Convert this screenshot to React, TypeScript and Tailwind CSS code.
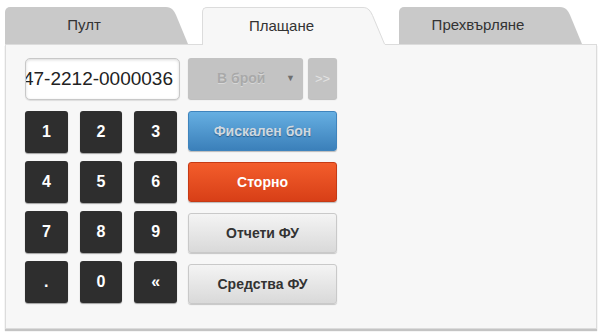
import React from 'react';

const tabs = [
  { label: 'Пулт', active: false },
  { label: 'Плащане', active: true },
  { label: 'Прехвърляне', active: false },
];

const keys = ['1', '2', '3', '4', '5', '6', '7', '8', '9', '.', '0', '«'];

const Tab: React.FC<{ label: string; active: boolean }> = ({ label, active }) => (
  <div className={`relative flex h-[37px] w-[183px] ${active ? 'z-10 -mb-px h-[38px]' : ''}`}>
    <div
      className={`flex flex-1 items-center justify-center rounded-tl-[5px] text-[15px] text-[#333] ${
        active ? 'border-l border-t border-[#dcdcdc] bg-[#f7f7f7]' : 'bg-[#c9c9c9]'
      }`}
    >
      {label}
    </div>
    <svg width="25" height={active ? 38 : 37} viewBox={`0 0 25 ${active ? 38 : 37}`} className="block">
      <path
        d={active ? 'M0 0 H3 C9 0 11 4 13 8 L25 38 H0 Z' : 'M0 0 H3 C9 0 11 4 13 8 L25 37 H0 Z'}
        fill={active ? '#f7f7f7' : '#c9c9c9'}
      />
      {active && <path d="M0 0.5 H3 C8.5 0.5 10.5 4.5 12.5 8.5 L24.5 37" fill="none" stroke="#dcdcdc" />}
    </svg>
  </div>
);

const App: React.FC = () => {
  return (
    <div className="h-[334px] w-[600px] bg-white pl-[5px] pt-[7px] font-['Liberation_Sans',Arial,sans-serif]">
      {/* Tabs */}
      <div className="flex gap-[14px]">
        {tabs.map((t) => (
          <Tab key={t.label} label={t.label} active={t.active} />
        ))}
      </div>

      {/* Panel */}
      <div className="flex h-[285px] w-[592px] gap-2 border border-[#dcdcdc] bg-[#f7f7f7] pl-[19px] pt-[13px] shadow-[0_2px_1px_#c4c4c4]">
        {/* Left column */}
        <div className="flex w-[155px] flex-col gap-[11px]">
          <div className="flex h-[42px] items-center justify-end overflow-hidden whitespace-nowrap rounded-[5px] border border-[#c8c8c8] bg-white pr-[6px] text-[19px] text-[#222] shadow-[inset_0_1px_3px_rgba(0,0,0,0.15),0_1px_1px_rgba(0,0,0,0.1)]">
            47-2212-0000036
          </div>
          <div className="grid w-[152px] grid-cols-3 gap-x-[12px] gap-y-2">
            {keys.map((k) => (
              <div
                key={k}
                className="flex h-[42px] items-center justify-center rounded-[3px] bg-[#2e2e2e] text-[16px] font-bold text-white shadow-[0_1px_1px_rgba(0,0,0,0.35)]"
              >
                {k}
              </div>
            ))}
          </div>
        </div>

        {/* Right column */}
        <div className="flex w-[149px] flex-col gap-[11px]">
          <div className="mb-px flex h-[41px] gap-[5px]">
            <div className="flex flex-1 items-center rounded-[3px] bg-[#c3c3c3] pl-[29px] pr-[8px] text-[14px] font-bold text-[#a9a9a9] shadow-[0_1px_1px_rgba(0,0,0,0.25)] [text-shadow:0_1px_0_#d8d8d8]">
              <span className="flex-1">В брой</span>
              <span className="text-[9px] text-[#6f6f6f] [text-shadow:none]">▼</span>
            </div>
            <div className="flex w-[29px] items-center justify-center rounded-[3px] bg-[#c3c3c3] text-[13px] text-[#e2e2e2] shadow-[0_1px_1px_rgba(0,0,0,0.25)]">
              &gt;&gt;
            </div>
          </div>
          <div className="flex h-[40px] items-center justify-center rounded-[3px] border border-[#3f84bd] bg-gradient-to-b from-[#66afe2] to-[#3b80ba] text-[14px] font-bold text-[#cfd8e0] shadow-[0_1px_1px_rgba(0,0,0,0.25)] [text-shadow:0_1px_1px_#2c5f8a]">
            Фискален бон
          </div>
          <div className="flex h-[40px] items-center justify-center rounded-[3px] border border-[#c63a15] bg-gradient-to-b from-[#f35d2b] to-[#d83f17] text-[14px] font-bold text-white shadow-[0_1px_1px_rgba(0,0,0,0.25)]">
            Сторно
          </div>
          <div className="flex h-[40px] items-center justify-center rounded-[3px] border border-[#c9c9c9] bg-gradient-to-b from-[#f4f4f4] to-[#d9d9d9] text-[14px] font-bold text-[#333] shadow-[0_1px_1px_rgba(0,0,0,0.2)]">
            Отчети ФУ
          </div>
          <div className="flex h-[40px] items-center justify-center rounded-[3px] border border-[#c9c9c9] bg-gradient-to-b from-[#f4f4f4] to-[#d9d9d9] text-[14px] font-bold text-[#333] shadow-[0_1px_1px_rgba(0,0,0,0.2)]">
            Средства ФУ
          </div>
        </div>
      </div>
    </div>
  );
};

export default App;
